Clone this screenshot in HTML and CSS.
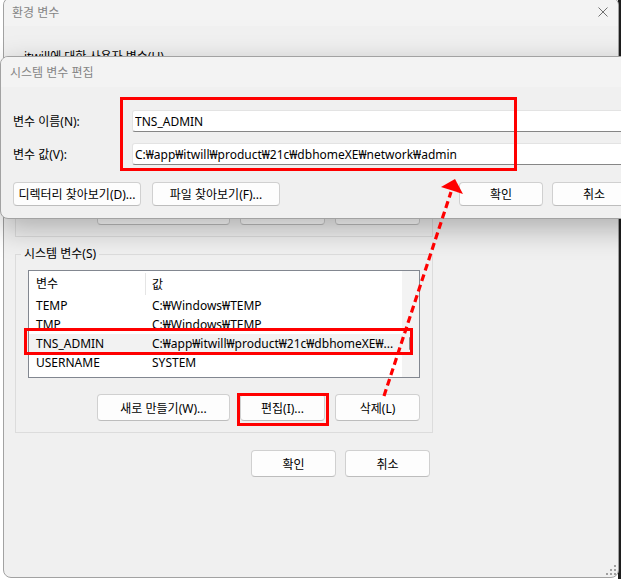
FILE: index.html
```html
<!DOCTYPE html>
<html lang="ko">
<head>
  <meta charset="UTF-8">
  <meta name="viewport" content="width=device-width, initial-scale=1.0">
  <title>환경 변수</title>
  <link rel="stylesheet" href="styles.css">
</head>
<body>
  <div class="desktop">

    <div class="window env-window">
      <div class="titlebar">
        <span class="title">환경 변수</span>
        <svg class="close" width="10" height="10" viewBox="0 0 10 10">
          <path d="M0.5 0.5 L9.5 9.5 M9.5 0.5 L0.5 9.5" stroke="#707070" stroke-width="1" fill="none"/>
        </svg>
      </div>
      <div class="env-body">
        <fieldset class="group">
          <legend>itwill에 대한 사용자 변수(U)</legend>
          <div class="list user-list"></div>
          <div class="group-buttons">
            <button class="btn btn-wide">새로 만들기(N)...</button>
            <button class="btn">편집(E)...</button>
            <button class="btn">삭제(D)</button>
          </div>
        </fieldset>

        <fieldset class="group sys-group">
          <legend>시스템 변수(S)</legend>
          <div class="list">
            <div class="list-main">
              <div class="list-head">
                <span class="col-name">변수</span>
                <span class="col-val">값</span>
              </div>
              <div class="row"><span class="col-name">TEMP</span><span class="col-val">C:₩Windows₩TEMP</span></div>
              <div class="row"><span class="col-name">TMP</span><span class="col-val">C:₩Windows₩TEMP</span></div>
              <div class="row selected"><span class="col-name">TNS_ADMIN</span><span class="col-val">C:₩app₩itwill₩product₩21c₩dbhomeXE₩...</span></div>
              <div class="row"><span class="col-name">USERNAME</span><span class="col-val">SYSTEM</span></div>
            </div>
            <div class="scrollbar"><div class="thumb"></div></div>
          </div>
          <div class="group-buttons">
            <button class="btn btn-wide">새로 만들기(W)...</button>
            <button class="btn">편집(I)...</button>
            <button class="btn">삭제(L)</button>
          </div>
        </fieldset>

        <div class="dialog-buttons">
          <button class="btn">확인</button>
          <button class="btn">취소</button>
        </div>
      </div>
      <svg class="grip" width="12" height="12" viewBox="0 0 12 12">
        <rect x="9" y="1" width="2" height="2" fill="#a0a0a0"/>
        <rect x="5" y="5" width="2" height="2" fill="#a0a0a0"/>
        <rect x="9" y="5" width="2" height="2" fill="#a0a0a0"/>
        <rect x="1" y="9" width="2" height="2" fill="#a0a0a0"/>
        <rect x="5" y="9" width="2" height="2" fill="#a0a0a0"/>
        <rect x="9" y="9" width="2" height="2" fill="#a0a0a0"/>
      </svg>
    </div>

    <div class="window edit-window">
      <div class="titlebar">
        <span class="title">시스템 변수 편집</span>
      </div>
      <div class="edit-body">
        <div class="field">
          <label for="var-name">변수 이름(N):</label>
          <input type="text" id="var-name" value="TNS_ADMIN">
        </div>
        <div class="field">
          <label for="var-value">변수 값(V):</label>
          <input type="text" id="var-value" value="C:₩app₩itwill₩product₩21c₩dbhomeXE₩network₩admin">
        </div>
        <div class="edit-buttons">
          <div class="btn-group">
            <button class="btn btn-browse">디렉터리 찾아보기(D)...</button>
            <button class="btn btn-browse">파일 찾아보기(F)...</button>
          </div>
          <div class="btn-group btn-group-tight">
            <button class="btn">확인</button>
            <button class="btn">취소</button>
          </div>
        </div>
      </div>
    </div>

    <div class="mark mark-fields"></div>
    <div class="mark mark-row"></div>
    <div class="mark mark-edit"></div>

    <svg class="arrow" width="621" height="579" viewBox="0 0 621 579">
      <line x1="384" y1="396" x2="451" y2="192" stroke="#ff0000" stroke-width="3.2" stroke-dasharray="7 4"/>
      <polygon points="455,179 441,187 463,194" fill="#ff0000"/>
    </svg>

  </div>
</body>
</html>
```

FILE: styles.css
```css
body {
  margin: 0;
  font-family: "Noto Sans", "Noto Sans CJK KR", sans-serif;
  font-size: 12px;
  color: #000;
}
.desktop {
  position: relative;
  width: 621px;
  height: 579px;
  overflow: hidden;
  background: linear-gradient(to right, #fff 0, #fff 618px, #1e1e1e 618px);
}
.window {
  position: absolute;
  box-sizing: border-box;
  border: 1px solid #a2a2a2;
  border-radius: 8px;
  background: #f0f0f0;
}
.titlebar {
  display: flex;
  align-items: center;
  background: #f3f3f3;
}
.title {
  color: #858585;
}

/* 환경 변수 (뒤 창) */
.env-window {
  left: 3px;
  top: -3px;
  width: 616px;
  height: 581px;
}
.env-window .titlebar {
  height: 28px;
  padding-left: 8px;
  border-radius: 8px 8px 0 0;
}
.close {
  margin-left: auto;
  margin-right: 10px;
}
.env-body {
  width: 418px;
  padding: 23px 0 0 11px;
}
.group {
  margin: 0;
  padding: 8px 12px 11px;
  border: 1px solid #dcdcdc;
  width: 418px;
  box-sizing: border-box;
  min-width: 0;
}
.group legend {
  padding: 0 3px;
  margin-left: -7px;
  line-height: 16px;
}
.sys-group {
  margin-top: 9px;
}
.list {
  display: flex;
  box-sizing: border-box;
  height: 108px;
  border: 1px solid #828790;
  background: #fff;
  overflow: hidden;
}
.user-list {
  height: 109px;
}
.list-main {
  flex: 1;
}
.list-head,
.row {
  display: flex;
  align-items: center;
  white-space: nowrap;
}
.list-head {
  height: 25px;
}
.row {
  height: 19px;
}
.row.selected {
  background: #f2f2f2;
}
.col-name {
  width: 117px;
  box-sizing: border-box;
  padding-left: 7px;
}
.list-head .col-name {
  height: 22px;
  line-height: 22px;
  border-right: 1px solid #e5e5e5;
}
.col-val {
  padding-left: 6px;
}
.scrollbar {
  width: 17px;
  background: #f3f3f3;
}
.thumb {
  width: 2px;
  height: 13px;
  margin: 66px 0 0 7px;
  background: #8a8a8a;
  border-radius: 1px;
}
.btn {
  width: 85px;
  height: 27px;
  box-sizing: border-box;
  padding: 0;
  border: 1px solid #d0d0d0;
  border-bottom-color: #bdbdbd;
  border-radius: 4px;
  background: #fdfdfd;
  font: inherit;
  color: #000;
  white-space: nowrap;
}
.btn-wide {
  width: 133px;
}
.group-buttons {
  display: flex;
  justify-content: flex-end;
  gap: 10px;
  margin-top: 16px;
}
.dialog-buttons {
  display: flex;
  justify-content: flex-end;
  gap: 9px;
  margin-top: 17px;
  padding-right: 3px;
}
.grip {
  position: absolute;
  right: 1px;
  bottom: 1px;
}

/* 시스템 변수 편집 (앞 창) */
.edit-window {
  left: 0;
  top: 56px;
  width: 650px;
  overflow: hidden;
  box-shadow: 0 10px 30px rgba(0, 0, 0, 0.28);
}
.edit-window .titlebar {
  height: 30px;
  padding-left: 9px;
}
.edit-body {
  padding: 23px 13px 12px 12px;
}
.field {
  display: flex;
  align-items: center;
}
.field + .field {
  margin-top: 11px;
}
.field label {
  width: 119px;
}
.field input {
  flex: 1;
  height: 22px;
  box-sizing: border-box;
  padding: 0 0 0 2px;
  border: 1px solid #e3e3e3;
  border-bottom-color: #868686;
  border-radius: 3px;
  background: #fff;
  font: inherit;
  color: #000;
  outline: none;
}
.edit-buttons {
  display: flex;
  justify-content: space-between;
  margin-top: 17px;
}
.btn-group {
  display: flex;
  gap: 11px;
}
.btn-group-tight {
  gap: 9px;
}
.edit-buttons .btn {
  height: 24px;
  width: 84px;
}
.edit-buttons .btn-browse {
  width: 128px;
}

/* 빨간 표시 */
.mark {
  position: absolute;
  box-sizing: border-box;
  border: 3px solid #ff0000;
}
.mark-fields {
  left: 120px;
  top: 97px;
  width: 397px;
  height: 74px;
}
.mark-row {
  left: 24px;
  top: 328px;
  width: 389px;
  height: 27px;
}
.mark-edit {
  left: 237px;
  top: 393px;
  width: 92px;
  height: 33px;
}
.arrow {
  position: absolute;
  left: 0;
  top: 0;
  pointer-events: none;
}
```
